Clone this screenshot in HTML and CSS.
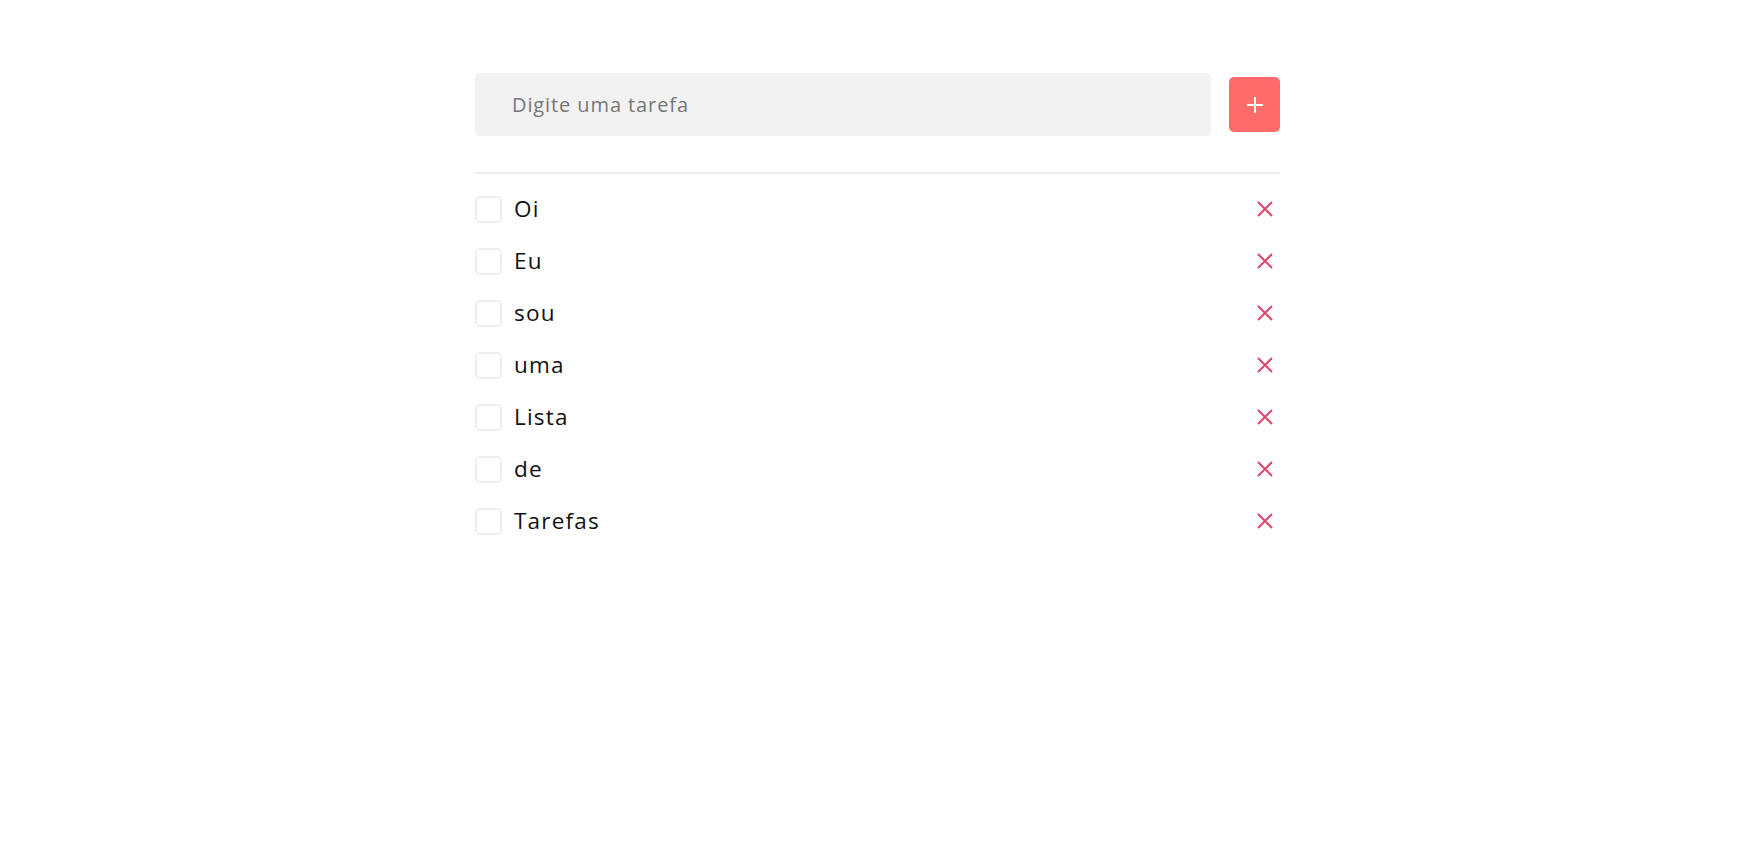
FILE: index.html
```html
<!DOCTYPE html>
<html lang="pt">
<head>
<meta charset="utf-8">
<title>Lista de Tarefas</title>
<link rel="stylesheet" href="styles.css">
</head>
<body>
<main class="app">
  <form class="new-task">
    <input class="task-input" type="text" placeholder="Digite uma tarefa">
    <button class="add-btn" type="button" aria-label="Adicionar">
      <svg width="18" height="18" viewBox="0 0 18 18"><path d="M9 1v16M1 9h16" stroke="#fff" stroke-width="2" fill="none"/></svg>
    </button>
  </form>
  <hr class="divider">
  <ul class="tasks">
    <li class="task"><span class="check"></span><span class="label">Oi</span><button class="del" type="button"><svg width="16" height="16" viewBox="0 0 16 16"><path d="M1 1l14 14M15 1L1 15" stroke="#e8426a" stroke-width="2" fill="none"/></svg></button></li>
    <li class="task"><span class="check"></span><span class="label">Eu</span><button class="del" type="button"><svg width="16" height="16" viewBox="0 0 16 16"><path d="M1 1l14 14M15 1L1 15" stroke="#e8426a" stroke-width="2" fill="none"/></svg></button></li>
    <li class="task"><span class="check"></span><span class="label">sou</span><button class="del" type="button"><svg width="16" height="16" viewBox="0 0 16 16"><path d="M1 1l14 14M15 1L1 15" stroke="#e8426a" stroke-width="2" fill="none"/></svg></button></li>
    <li class="task"><span class="check"></span><span class="label">uma</span><button class="del" type="button"><svg width="16" height="16" viewBox="0 0 16 16"><path d="M1 1l14 14M15 1L1 15" stroke="#e8426a" stroke-width="2" fill="none"/></svg></button></li>
    <li class="task"><span class="check"></span><span class="label">Lista</span><button class="del" type="button"><svg width="16" height="16" viewBox="0 0 16 16"><path d="M1 1l14 14M15 1L1 15" stroke="#e8426a" stroke-width="2" fill="none"/></svg></button></li>
    <li class="task"><span class="check"></span><span class="label">de</span><button class="del" type="button"><svg width="16" height="16" viewBox="0 0 16 16"><path d="M1 1l14 14M15 1L1 15" stroke="#e8426a" stroke-width="2" fill="none"/></svg></button></li>
    <li class="task"><span class="check"></span><span class="label">Tarefas</span><button class="del" type="button"><svg width="16" height="16" viewBox="0 0 16 16"><path d="M1 1l14 14M15 1L1 15" stroke="#e8426a" stroke-width="2" fill="none"/></svg></button></li>
  </ul>
</main>
</body>
</html>
```
FILE: styles.css
```css
* { box-sizing: border-box; }
body {
  margin: 0;
  background: #fff;
  font-family: "Open Sans", "Lato", sans-serif;
  color: #111;
}
.app {
  width: 805px;
  margin: 73px auto 0;
}
.new-task {
  display: flex;
  align-items: center;
  gap: 18px;
}
.task-input {
  flex: 1;
  height: 63px;
  border: none;
  outline: none;
  background: #f2f2f2;
  border-radius: 5px;
  padding: 0 0 0 37px;
  font-family: inherit;
  font-size: 20px;
  letter-spacing: 0.9px;
  color: #333;
}
.task-input::placeholder { color: #777; }
.add-btn {
  width: 51px;
  height: 55px;
  border: none;
  border-radius: 5px;
  background: #ff6b6b;
  display: flex;
  align-items: center;
  justify-content: center;
  padding: 0;
}
.divider {
  border: none;
  border-top: 2px solid #eeeeee;
  margin: 36px 0 0;
}
.tasks {
  list-style: none;
  margin: 9px 0 0;
  padding: 0;
}
.task {
  display: flex;
  align-items: center;
  height: 52px;
}
.check {
  width: 27px;
  height: 27px;
  border: 2px solid #eeeeee;
  border-radius: 5px;
  flex: none;
}
.label {
  margin-left: 12px;
  font-size: 22.5px;
  letter-spacing: 1.2px;
  flex: 1;
  position: relative;
  top: -1px;
}
.del {
  width: 30px;
  height: 30px;
  border: none;
  background: none;
  padding: 0;
  display: flex;
  align-items: center;
  justify-content: center;
}
```
